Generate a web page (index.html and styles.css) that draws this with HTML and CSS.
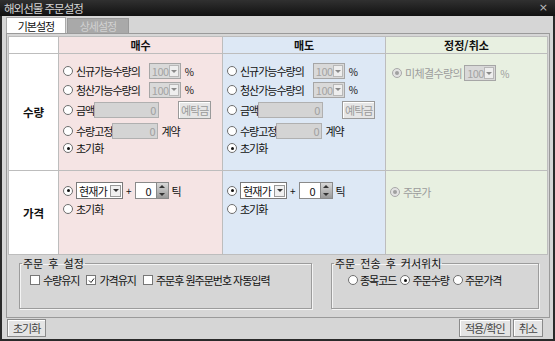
FILE: index.html
```html
<!DOCTYPE html>
<html lang="ko">
<head>
    <meta charset="UTF-8">
    <title>해외선물 주문설정</title>
    <link rel="stylesheet" href="styles.css">
</head>
<body>
<div class="window">
    <div class="titlebar">
        <span class="title">해외선물 주문설정</span>
        <span class="close">×</span>
    </div>
    <div class="tabs">
        <div class="tab active">기본설정</div>
        <div class="tab">상세설정</div>
    </div>

    <div class="panel">
        <div class="grid">
            <div class="cell label"></div>
            <div class="cell head buy">매수</div>
            <div class="cell head sell">매도</div>
            <div class="cell head fix">정정/취소</div>

            <div class="cell label side">수량</div>
            <div class="cell buy qty">
                <div class="opt"><span class="rd"></span>신규가능수량의<span class="combo dis">100<span class="arr"><i class="down"></i></span></span><span class="pct">%</span></div>
                <div class="opt"><span class="rd"></span>청산가능수량의<span class="combo dis">100<span class="arr"><i class="down"></i></span></span><span class="pct">%</span></div>
                <div class="opt"><span class="rd"></span>금액<span class="field amt">0</span><span class="minibtn">예탁금</span></div>
                <div class="opt"><span class="rd"></span>수량고정<span class="field fixq">0</span><span class="unit">계약</span></div>
                <div class="opt"><span class="rd on"></span>초기화</div>
            </div>
            <div class="cell sell qty">
                <div class="opt"><span class="rd"></span>신규가능수량의<span class="combo dis">100<span class="arr"><i class="down"></i></span></span><span class="pct">%</span></div>
                <div class="opt"><span class="rd"></span>청산가능수량의<span class="combo dis">100<span class="arr"><i class="down"></i></span></span><span class="pct">%</span></div>
                <div class="opt"><span class="rd"></span>금액<span class="field amt">0</span><span class="minibtn">예탁금</span></div>
                <div class="opt"><span class="rd"></span>수량고정<span class="field fixq">0</span><span class="unit">계약</span></div>
                <div class="opt"><span class="rd on"></span>초기화</div>
            </div>
            <div class="cell fix qty">
                <div class="opt grey"><span class="rd dis"></span><span class="wide">미체결수량의</span><span class="combo dis">100<span class="arr"><i class="down"></i></span></span><span class="pct">%</span></div>
            </div>

            <div class="cell label side">가격</div>
            <div class="cell buy price">
                <div class="opt"><span class="rd on"></span><span class="combo live">현재가<span class="arr"><i class="down"></i></span></span><span class="plus">+</span><span class="spin">0<span class="spbtn"><i class="up"></i><i class="down"></i></span></span><span class="unit">틱</span></div>
                <div class="opt"><span class="rd"></span>초기화</div>
            </div>
            <div class="cell sell price">
                <div class="opt"><span class="rd on"></span><span class="combo live">현재가<span class="arr"><i class="down"></i></span></span><span class="plus">+</span><span class="spin">0<span class="spbtn"><i class="up"></i><i class="down"></i></span></span><span class="unit">틱</span></div>
                <div class="opt"><span class="rd"></span>초기화</div>
            </div>
            <div class="cell fix price">
                <div class="opt grey"><span class="rd dis"></span>주문가</div>
            </div>
        </div>

        <div class="groups">
            <fieldset class="group after">
                <legend>주문 후 설정</legend>
                <div class="choices">
                    <span class="chk"><span class="cb"></span>수량유지</span>
                    <span class="chk"><span class="cb"><svg width="7" height="7" viewBox="0 0 7 7"><polyline points="1,3.5 3,5.5 6,1.5" fill="none" stroke="#222" stroke-width="1"/></svg></span>가격유지</span>
                    <span class="chk"><span class="cb"></span>주문후 원주문번호 자동입력</span>
                </div>
            </fieldset>
            <fieldset class="group cursor">
                <legend>주문 전송 후 커서위치</legend>
                <div class="choices">
                    <span class="chk"><span class="rd"></span>종목코드</span>
                    <span class="chk"><span class="rd on"></span>주문수량</span>
                    <span class="chk"><span class="rd"></span>주문가격</span>
                </div>
            </fieldset>
        </div>
    </div>

    <div class="footer">
        <span class="btn">초기화</span>
        <span class="spacer"></span>
        <span class="btn">적용/확인</span>
        <span class="btn">취소</span>
    </div>
</div>
</body>
</html>
```

FILE: styles.css
```css
body { margin: 0; font-family: "Noto Sans CJK KR", "Noto Sans", sans-serif; font-size: 11px; letter-spacing: -1px; color: #111; }
.window { width: 555px; height: 341px; box-sizing: border-box; background: #d6d6d6; border: 2px solid #2a2a2a; border-top: 0; display: flex; flex-direction: column; }

.titlebar { height: 16px; flex: none; display: flex; align-items: center; justify-content: space-between; background: linear-gradient(#303030, #111); color: #d6d6d6; padding: 0 7px 0 4px; margin: 0 -2px; font-size: 11.5px; line-height: 16px; }
.close { font-family: "DejaVu Sans", sans-serif; font-size: 11px; line-height: 14px; color: #bbb; letter-spacing: 0; }

.tabs { height: 17px; flex: none; display: flex; align-items: flex-end; padding-left: 4px; gap: 1px; }
.tab { height: 15px; line-height: 15px; padding: 0 6px; background: #a9a9a9; color: #d2d2d2; border: 1px solid #999; border-bottom: 0; box-sizing: border-box; width: 62px; text-align: center; }
.tab.active { height: 16px; line-height: 16px; width: 60px; background: #fff; color: #111; border-color: #aaa; }

.panel { height: 285px; flex: none; box-sizing: border-box; margin-left: 4px; width: 544px; border: 1px solid #9a9a9a; padding: 2px 0 0 1px; }

.grid { display: grid; grid-template-columns: 49px 163px 162px 161px; grid-template-rows: 16px 116px 83px; gap: 1px; background: #bdbdbd; border: 1px solid #bdbdbd; width: 540px; box-sizing: border-box; }
.cell { box-sizing: border-box; }
.label { background: #fff; }
.buy { background: #f5e4e4; }
.sell { background: #dde8f5; }
.fix { background: #e8f0e1; }
.head { font-weight: bold; text-align: center; line-height: 16px; letter-spacing: 0; }
.side { display: flex; align-items: center; justify-content: center; font-weight: bold; font-size: 11.5px; letter-spacing: 0; }

.qty { padding: 8px 0 0 4px; }
.price { padding: 10px 0 0 4px; }
.fix.qty { padding: 10px 0 0 6px; }
.fix.price { padding: 11px 0 0 4px; }
.opt { display: flex; align-items: center; height: 18px; white-space: nowrap; }
.qty .opt:nth-child(2) { height: 19px; }
.qty .opt:nth-child(3) { height: 21px; }
.qty .opt:nth-child(4) { height: 21px; }
.qty .opt:nth-child(5) { height: 14px; }
.price .opt:first-child { height: 19px; }
.grey { color: #9c9c9c; }
.wide { letter-spacing: -0.6px; }

.rd { width: 10px; height: 10px; box-sizing: border-box; border-radius: 50%; border: 1px solid #6e6e6e; background: #fff; display: inline-flex; align-items: center; justify-content: center; margin-right: 3px; flex: none; }
.rd.on::after { content: ""; width: 3px; height: 3px; border-radius: 50%; background: #111; }
.rd.dis { border-color: #a8a8a8; background: #e2e2e2; }
.rd.dis::after { content: ""; width: 4px; height: 4px; border-radius: 50%; background: #a0a0a0; }

.combo { display: inline-flex; align-items: center; box-sizing: border-box; height: 16px; border: 1px solid #a6a6a6; padding-left: 2px; letter-spacing: -0.5px; }
.combo.dis { width: 32px; margin-left: 9px; background: #d9d9d9; color: #a4a4a4; }
.fix .combo.dis { margin-left: 2px; }
.combo.live { width: 47px; height: 17px; background: #fff; border-color: #7a7a7a; color: #111; letter-spacing: -0.8px; }
.arr { margin-left: auto; width: 11px; height: 12px; margin-right: 1px; box-sizing: border-box; border: 1px solid #b8b8b8; background: #eee; display: flex; align-items: center; justify-content: center; }
.live .arr { border-color: #999; background: #f0f0f0; }
.down { width: 0; height: 0; border-left: 3px solid transparent; border-right: 3px solid transparent; border-top: 3px solid #8a8a8a; }
.up { width: 0; height: 0; border-left: 3px solid transparent; border-right: 3px solid transparent; border-bottom: 3px solid #333; }
.live .down, .spbtn .down { border-top-color: #333; }
.pct { margin-left: 4px; font-size: 10px; letter-spacing: 0; }

.field { display: inline-flex; align-items: center; justify-content: flex-end; box-sizing: border-box; height: 16px; background: #d4d4d4; border: 1px solid #b0b0b0; color: #a0a0a0; padding-right: 3px; }
.amt { width: 65px; }
.fixq { width: 46px; }
.unit { margin-left: 3px; }
.minibtn { margin-left: 19px; height: 18px; width: 33px; box-sizing: border-box; border: 1px solid #9a9a9a; background: #e6e6e6; color: #9a9a9a; display: inline-flex; align-items: center; justify-content: center; box-shadow: inset 1px 1px #fff; }

.plus { margin: 0 3px; font-size: 10px; letter-spacing: 0; }
.spin { display: inline-flex; align-items: center; justify-content: flex-end; width: 34px; height: 17px; box-sizing: border-box; border: 1px solid #8a8a8a; background: #fff; padding-right: 16px; position: relative; letter-spacing: 0; }
.spbtn { position: absolute; right: 0; top: 0; bottom: 0; width: 11px; display: flex; flex-direction: column; align-items: center; justify-content: space-around; background: linear-gradient(#d8d8d8, #9a9a9a); border-left: 1px solid #888; }

.groups { display: flex; gap: 19px; padding-left: 11px; margin-top: 2px; }
.group { margin: 0; height: 52px; box-sizing: border-box; border: 1px solid #9c9c9c; box-shadow: 1px 1px #f4f4f4, inset 1px 1px #f4f4f4; padding: 0 0 0 2px; }
.group legend { padding: 0 1px; line-height: 12px; letter-spacing: 0; word-spacing: 2px; }
.after { width: 293px; }
.cursor { width: 208px; }
.choices { display: flex; align-items: center; height: 16px; margin-top: 3px; }
.after .choices { padding-left: 8px; gap: 7px; }
.cursor .choices { padding-left: 14px; gap: 4px; }
.chk { display: inline-flex; align-items: center; white-space: nowrap; }
.chk .rd { margin-right: 2px; }
.cb { width: 10px; height: 10px; box-sizing: border-box; border: 1px solid #777; background: #fff; margin-right: 3px; display: inline-flex; align-items: center; justify-content: center; }
.cb svg { display: block; }

.footer { flex: 1; display: flex; align-items: flex-start; padding: 1px 10px 0 5px; gap: 2px; }
.spacer { flex: 1; }
.btn { height: 18px; box-sizing: border-box; padding: 0 5px; border: 1px solid #8a8a8a; background: #e4e4e4; color: #444; display: inline-flex; align-items: center; box-shadow: inset 1px 1px #fff; }
```
